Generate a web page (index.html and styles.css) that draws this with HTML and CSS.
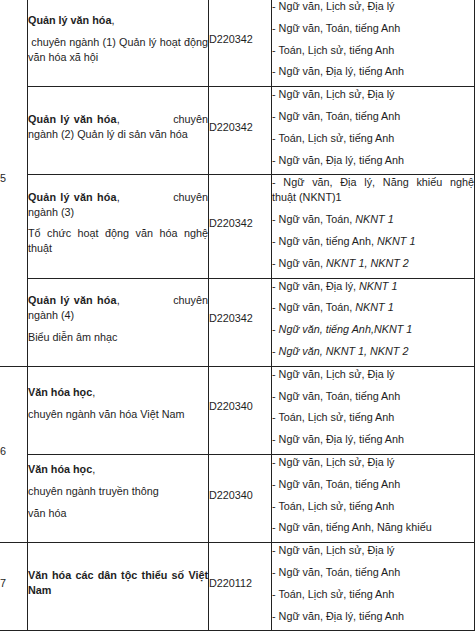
FILE: index.html
```html
<!DOCTYPE html>
<html lang="vi">
<head>
<meta charset="utf-8">
<title>Bảng ngành</title>
<link rel="stylesheet" href="styles.css">
</head>
<body>
<table class="grid">
  <colgroup>
    <col class="c-num">
    <col class="c-name">
    <col class="c-code">
    <col class="c-subj">
  </colgroup>
  <tr>
    <td rowspan="4" class="num"><p>5</p></td>
    <td class="name"><p><b>Quản lý văn hóa</b>,</p><p>&nbsp;chuyên ngành (1) Quản lý hoạt động văn hóa xã hội</p></td>
    <td class="code"><p>D220342</p></td>
    <td class="subj">
      <p>- Ngữ văn, Lịch sử, Địa lý</p>
      <p>- Ngữ văn, Toán, tiếng Anh</p>
      <p>- Toán, Lịch sử, tiếng Anh</p>
      <p>- Ngữ văn, Địa lý, tiếng Anh</p>
    </td>
  </tr>
  <tr>
    <td class="name"><p><span class="split"><span><b class="wide">Quản lý văn hóa</b>,</span><span>chuyên</span></span>ngành (2) Quản lý di sản văn hóa</p></td>
    <td class="code"><p>D220342</p></td>
    <td class="subj">
      <p>- Ngữ văn, Lịch sử, Địa lý</p>
      <p>- Ngữ văn, Toán, tiếng Anh</p>
      <p>- Toán, Lịch sử, tiếng Anh</p>
      <p>- Ngữ văn, Địa lý, tiếng Anh</p>
    </td>
  </tr>
  <tr>
    <td class="name"><p><span class="split"><span><b class="wide">Quản lý văn hóa</b>,</span><span>chuyên</span></span>ngành (3)</p><p>Tổ chức hoạt động văn hóa nghệ thuật</p></td>
    <td class="code"><p>D220342</p></td>
    <td class="subj">
      <p><span class="jline">- Ngữ văn, Địa lý, Năng khiếu nghệ</span>thuật (NKNT)1</p>
      <p>- Ngữ văn, Toán, <i>NKNT 1</i></p>
      <p>- Ngữ văn, tiếng Anh, <i>NKNT 1</i></p>
      <p>- Ngữ văn, <i>NKNT 1, NKNT 2</i></p>
    </td>
  </tr>
  <tr>
    <td class="name"><p><span class="split"><span><b class="wide">Quản lý văn hóa</b>,</span><span>chuyên</span></span>ngành (4)</p><p>Biểu diễn âm nhạc</p></td>
    <td class="code"><p>D220342</p></td>
    <td class="subj">
      <p>- Ngữ văn, Địa lý, <i>NKNT 1</i></p>
      <p>- Ngữ văn, Toán, <i>NKNT 1</i></p>
      <p>- <i>Ngữ văn, tiếng Anh,NKNT 1</i></p>
      <p>- <i>Ngữ văn, NKNT 1, NKNT 2</i></p>
    </td>
  </tr>
  <tr>
    <td rowspan="2" class="num"><p>6</p></td>
    <td class="name name-lift"><p><b>Văn hóa học</b>,</p><p>chuyên ngành văn hóa Việt Nam</p></td>
    <td class="code"><p>D220340</p></td>
    <td class="subj">
      <p>- Ngữ văn, Lịch sử, Địa lý</p>
      <p>- Ngữ văn, Toán, tiếng Anh</p>
      <p>- Toán, Lịch sử, tiếng Anh</p>
      <p>- Ngữ văn, Địa lý, tiếng Anh</p>
    </td>
  </tr>
  <tr>
    <td class="name name-lift"><p><b>Văn hóa học</b>,</p><p>chuyên ngành truyền thông</p><p>văn hóa</p></td>
    <td class="code"><p>D220340</p></td>
    <td class="subj">
      <p>- Ngữ văn, Lịch sử, Địa lý</p>
      <p>- Ngữ văn, Toán, tiếng Anh</p>
      <p>- Toán, Lịch sử, tiếng Anh</p>
      <p>- Ngữ văn, tiếng Anh, Năng khiếu</p>
    </td>
  </tr>
  <tr>
    <td class="num"><p>7</p></td>
    <td class="name"><p><b>Văn hóa các dân tộc thiểu số Việt Nam</b></p></td>
    <td class="code"><p>D220112</p></td>
    <td class="subj">
      <p>- Ngữ văn, Lịch sử, Địa lý</p>
      <p>- Ngữ văn, Toán, tiếng Anh</p>
      <p>- Toán, Lịch sử, tiếng Anh</p>
      <p>- Ngữ văn, Địa lý, tiếng Anh</p>
    </td>
  </tr>
</table>
</body>
</html>
```

FILE: styles.css
```css
html, body {
  margin: 0;
  padding: 0;
  background: #ffffff;
}

body {
  font-family: "Liberation Sans", Arial, sans-serif;
  font-size: 10.8px;
  line-height: 15px;
  color: #1e1e1e;
  overflow: hidden;
}

.grid {
  border-collapse: collapse;
  table-layout: fixed;
  width: 475px;
  margin: -2px 0 0 -1px;
}

.c-num { width: 28px; }
.c-name { width: 181px; }
.c-code { width: 63px; }
.c-subj { width: 203px; }

.grid td {
  border: 1px solid #222222;
  padding: 0;
  vertical-align: middle;
}

.grid p {
  margin: 0 0 6.8px 0;
}

.name p,
.subj p {
  text-align: justify;
}

.jline {
  display: block;
  text-align: justify;
  text-align-last: justify;
}

.split {
  display: flex;
  justify-content: space-between;
}

.name b {
  font-weight: bold;
}

.name b.wide {
  word-spacing: 1px;
  letter-spacing: 0.15px;
}

.grid td.name-lift {
  padding-bottom: 7px;
}
```
